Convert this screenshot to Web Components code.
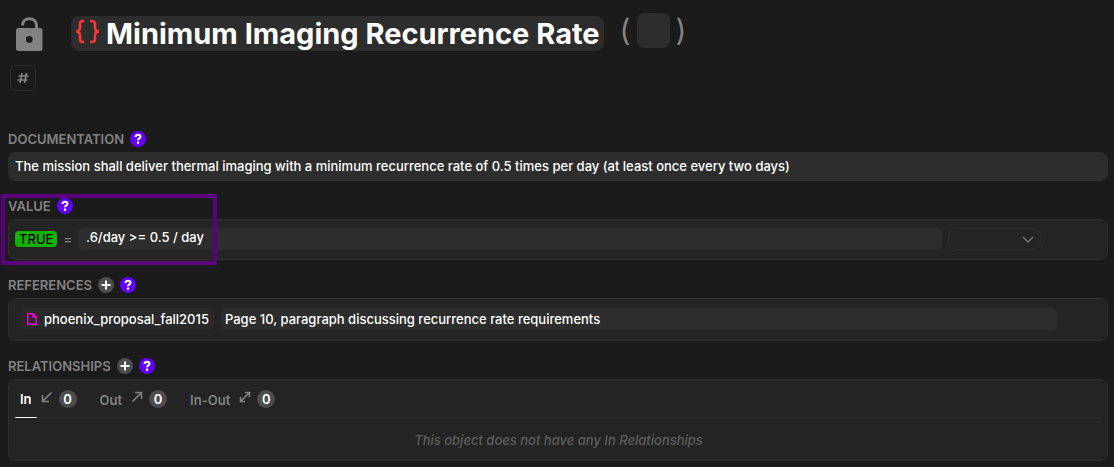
<!DOCTYPE html>
<html lang="en">
<head>
<meta charset="utf-8">
<meta name="viewport" content="width=device-width, initial-scale=1">
<title>Minimum Imaging Recurrence Rate</title>
<style>
  body {
    margin: 0;
    background: #1b1b1b;
    color: #fff;
    font: 500 13px/20px Inter, "Liberation Sans", sans-serif;
    --panel: #242424;
    --line: #2f2f2f;
    --field: #2d2d2d;
    --muted: #828282;
    --badge: #4d4d4d;
    --help: #6200ff;
    --mark: #5c0080;
  }
</style>
</head>
<body>
<requirement-page></requirement-page>

<script>
const define = (name, html, setup) => {
  const template = document.createElement('template');
  template.innerHTML = html;
  customElements.define(name, class extends HTMLElement {
    constructor() {
      super();
      this.attachShadow({ mode: 'open' }).append(template.content.cloneNode(true));
    }
    connectedCallback() {
      if (setup) setup(this, this.shadowRoot);
    }
  });
};

define('round-button', `
  <style>
    :host { display: block; flex: none; }
    button { display: block; width: 16px; height: 16px; margin: 0; padding: 0; border: 0; border-radius: 50%; background: var(--help); color: #fff; }
    :host([kind="add"]) button { background: var(--badge); }
    svg { display: none; width: 16px; height: 16px; }
    :host([kind="add"]) .add, :host([kind="help"]) .help { display: block; }
  </style>
  <button type="button">
    <svg class="add" viewBox="0 0 16 16" stroke="#fff" stroke-width="2"><path d="M8 3.500v9M3.500 8h9"/></svg>
    <svg class="help" viewBox="0 0 16 16" fill="none" stroke="#fff" stroke-width="2.2"><path d="M5.600 6C5.600 3 10.400 3.100 10.400 5.700C10.400 7.300 8 7.300 8 9.300M8 10.500v2.200"/></svg>
  </button>`,
  (host, root) => root.querySelector('button').setAttribute('aria-label', host.getAttribute('label')));

define('object-header', `
  <style>
    :host { display: block; }
    .row { display: flex; align-items: center; height: 39px; padding-left: 6px; }
    button { margin: 0; padding: 0; border: 0; background: none; color: var(--muted); font: inherit; }
    svg { display: block; }
    .lock { margin-right: 28px; }
    h1 { display: flex; align-items: center; gap: 6px; height: 35px; margin: 0; padding: 0 4px; border-radius: 8px; background: var(--field); font-size: 29px; line-height: 35px; font-weight: 700; white-space: nowrap; }
    h1 svg { margin-bottom: 4px; }
    .abbr { display: flex; align-items: center; gap: 6px; margin-left: 16px; padding-bottom: 6px; color: var(--muted); font-size: 30px; line-height: 35px; font-weight: 400; }
    input { width: 33px; height: 35px; box-sizing: border-box; margin: 0; padding: 0 4px; border: 0; border-radius: 8px; background: var(--field); color: #fff; font: inherit; }
    .tag { display: grid; place-items: center; box-sizing: border-box; width: 26px; height: 26px; margin: 12px 0 0 2px; border: 1px solid var(--line); border-radius: 6px; }
  </style>
  <header>
    <div class="row">
      <button class="lock" type="button" aria-label="Lock object">
        <svg width="29" height="36" viewBox="0 0 29 36"><path fill="none" stroke="currentColor" stroke-width="3" d="M8.500 9.500C8.500 .5 22.500 .5 22.500 9.500V14"/><path fill="currentColor" fill-rule="evenodd" d="M4.500 12H26a2.500 2.500 0 0 1 2.500 2.500V32.500a2.500 2.500 0 0 1-2.500 2.500H4.500a2.500 2.500 0 0 1-2.500-2.500V14.500a2.500 2.500 0 0 1 2.500-2.500ZM15.300 20a3.400 3.400 0 1 0 0 6.800a3.400 3.400 0 1 0 0-6.800Z"/></svg>
      </button>
      <h1>
        <svg width="25" height="27" viewBox="0 0 25 27" fill="none" stroke="#ff3535" stroke-width="2.600"><path d="M9 3H7.500Q5 3 5 6V9.500Q5 13.500 1 13.500Q5 13.500 5 17.500V21Q5 24 7.500 24H9M15 3H16.500Q20 3 20 6V9.500Q20 13.500 24 13.500Q20 13.500 20 17.500V21Q20 24 16.500 24H15"/></svg>
        <span>Minimum Imaging Recurrence Rate</span>
      </h1>
      <div class="abbr"><span>(</span><input type="text" aria-label="Abbreviation"><span>)</span></div>
    </div>
    <button class="tag" type="button" aria-label="Add tag">
      <svg width="12" height="12" viewBox="0 0 12 12" stroke="currentColor" stroke-width="1.700"><path d="M5 1L3 11M9.500 1L7.500 11M1.500 4H11.500M.500 8H10.500"/></svg>
    </button>
  </header>`);

define('page-section', `
  <style>
    :host { display: block; position: relative; }
    .head { display: flex; align-items: center; gap: 6px; height: 26px; }
    h2 { margin: 0; color: var(--muted); font-size: 13px; line-height: 20px; font-weight: 600; }
    .panel { box-sizing: border-box; border: 1px solid var(--line); border-radius: 8px; background: var(--panel); }
    :host([plain]) .panel { border: 0; background: none; }
    :host([plain]) .head { height: 25px; margin-bottom: 1px; }
    .mark { display: none; position: absolute; box-sizing: border-box; left: -7px; top: 1px; bottom: -5px; width: 216px; border: 4px solid var(--mark); pointer-events: none; }
    :host([marked]) .mark { display: block; }
  </style>
  <section>
    <div class="head"><h2></h2><slot name="actions"></slot></div>
    <div class="panel"><slot></slot></div>
    <div class="mark"></div>
  </section>`,
  (host, root) => { root.querySelector('h2').textContent = host.getAttribute('heading'); });

define('text-field', `
  <style>
    :host { display: block; flex: 1; min-width: 0; }
    input { display: block; box-sizing: border-box; width: 100%; height: 22px; margin: 0; padding: 0 4px; border: 0; border-radius: 5px; background: var(--field); color: #fff; font: inherit; }
    :host([size="large"]) input { height: 29px; padding: 0 7px 1px; border-radius: 8px; }
    :host([size="formula"]) input { padding: 0 8px 4px; }
  </style>
  <input type="text">`,
  (host, root) => {
    const input = root.querySelector('input');
    input.value = host.getAttribute('value');
    input.setAttribute('aria-label', host.getAttribute('label'));
  });

define('value-row', `
  <style>
    :host { display: flex; align-items: center; height: 22px; padding: 8px 66px 9px 6px; }
    .result { box-sizing: border-box; height: 16px; padding: 0 4px; border-radius: 4px; background: #12b300; color: #000; line-height: 16px; }
    .equals { margin: 0 6px; color: var(--muted); }
    .unit { position: relative; width: 93px; margin-left: 6px; }
    select { display: block; appearance: none; box-sizing: border-box; width: 100%; height: 22px; margin: 0; border: 1px solid var(--line); border-radius: 8px; background: transparent; color: #fff; font: inherit; }
    svg { position: absolute; right: 7px; top: 8px; pointer-events: none; }
  </style>
  <span class="result">TRUE</span>
  <span class="equals">=</span>
  <text-field size="formula" label="Formula" value=".6/day &gt;= 0.5 / day"></text-field>
  <div class="unit">
    <select aria-label="Unit"><option></option></select>
    <svg width="12" height="8" viewBox="0 0 12 8" fill="none" stroke="#747474" stroke-width="1.500"><path d="M1 1L6 6L11 1"/></svg>
  </div>`);

define('reference-row', `
  <style>
    :host { display: flex; align-items: center; gap: 7px; padding: 9px 50px 10px 12px; }
    a { display: flex; align-items: center; gap: 6px; height: 22px; padding: 0 5px; border-radius: 5px; background: #292929; color: #fff; text-decoration: none; white-space: nowrap; }
    svg { display: block; }
  </style>
  <a href="#phoenix_proposal_fall2015">
    <svg width="12" height="14" viewBox="0 0 12 14" fill="none" stroke="#f000d0" stroke-width="1.500"><path d="M1.800 1.800H7.200L10.200 4.800V12.200H1.800ZM7 2V5H10"/></svg>
    <span>phoenix_proposal_fall2015</span>
  </a>
  <text-field label="Reference note" value="Page 10, paragraph discussing recurrence rate requirements"></text-field>`);

define('relation-tab', `
  <style>
    :host { display: block; }
    button { display: flex; align-items: center; box-sizing: border-box; height: 38px; margin: 0; padding: 0; border: 0; background: none; color: var(--muted); font: inherit; font-weight: 600; }
    .name { display: flex; align-items: center; box-sizing: border-box; height: 37px; padding: 2px 5px 0; border-bottom: 1px solid transparent; }
    :host([selected]) .name { color: #fff; border-color: #fff; padding-top: 1px; }
    svg { display: block; margin: 0 6px 4px 4px; }
    .count { display: grid; place-items: center; width: 18px; height: 18px; border-radius: 50%; background: var(--badge); color: #fff; line-height: 18px; }
  </style>
  <button type="button" role="tab">
    <span class="name"><slot></slot></span>
    <svg width="12" height="12" viewBox="0 0 12 12" fill="none" stroke="currentColor" stroke-width="1.600"><path/></svg>
    <span class="count">0</span>
  </button>`,
  (host, root) => {
    const paths = {
      'in': 'M10.500 1.500L2 10M1.500 4V10.500H8',
      'out': 'M1.500 10.500L10 2M4 1.500H10.500V8',
      'both': 'M2 10L10 2M6 1.500H10.500V6M1.500 6V10.500H6'
    };
    root.querySelector('path').setAttribute('d', paths[host.getAttribute('direction')]);
    root.querySelector('button').setAttribute('aria-selected', host.hasAttribute('selected'));
  });

define('relation-list', `
  <style>
    :host { display: block; padding: 0 5px 0 6px; }
    .tabs { display: flex; gap: 18px; height: 37px; border-bottom: 1px solid var(--line); }
    p { margin: 0; padding: 12px 0 10px; color: #5e5e5e; text-align: center; font-style: italic; }
  </style>
  <div class="tabs" role="tablist">
    <relation-tab direction="in" selected>In</relation-tab>
    <relation-tab direction="out">Out</relation-tab>
    <relation-tab direction="both">In-Out</relation-tab>
  </div>
  <p>This object does not have any In Relationships</p>`);

define('requirement-page', `
  <style>
    :host { display: block; padding: 14px 6px 6px 8px; }
    main { display: flex; flex-direction: column; gap: 12px; }
    object-header { margin-bottom: 23px; }
  </style>
  <main>
    <object-header></object-header>
    <page-section heading="DOCUMENTATION" plain>
      <round-button slot="actions" kind="help" label="About documentation"></round-button>
      <text-field size="large" label="Documentation" value="The mission shall deliver thermal imaging with a minimum recurrence rate of 0.5 times per day (at least once every two days)"></text-field>
    </page-section>
    <page-section heading="VALUE" marked>
      <round-button slot="actions" kind="help" label="About value"></round-button>
      <value-row></value-row>
    </page-section>
    <page-section heading="REFERENCES">
      <round-button slot="actions" kind="add" label="Add reference"></round-button>
      <round-button slot="actions" kind="help" label="About references"></round-button>
      <reference-row></reference-row>
    </page-section>
    <page-section heading="RELATIONSHIPS">
      <round-button slot="actions" kind="add" label="Add relationship"></round-button>
      <round-button slot="actions" kind="help" label="About relationships"></round-button>
      <relation-list></relation-list>
    </page-section>
  </main>`);
</script>
</body>
</html>
